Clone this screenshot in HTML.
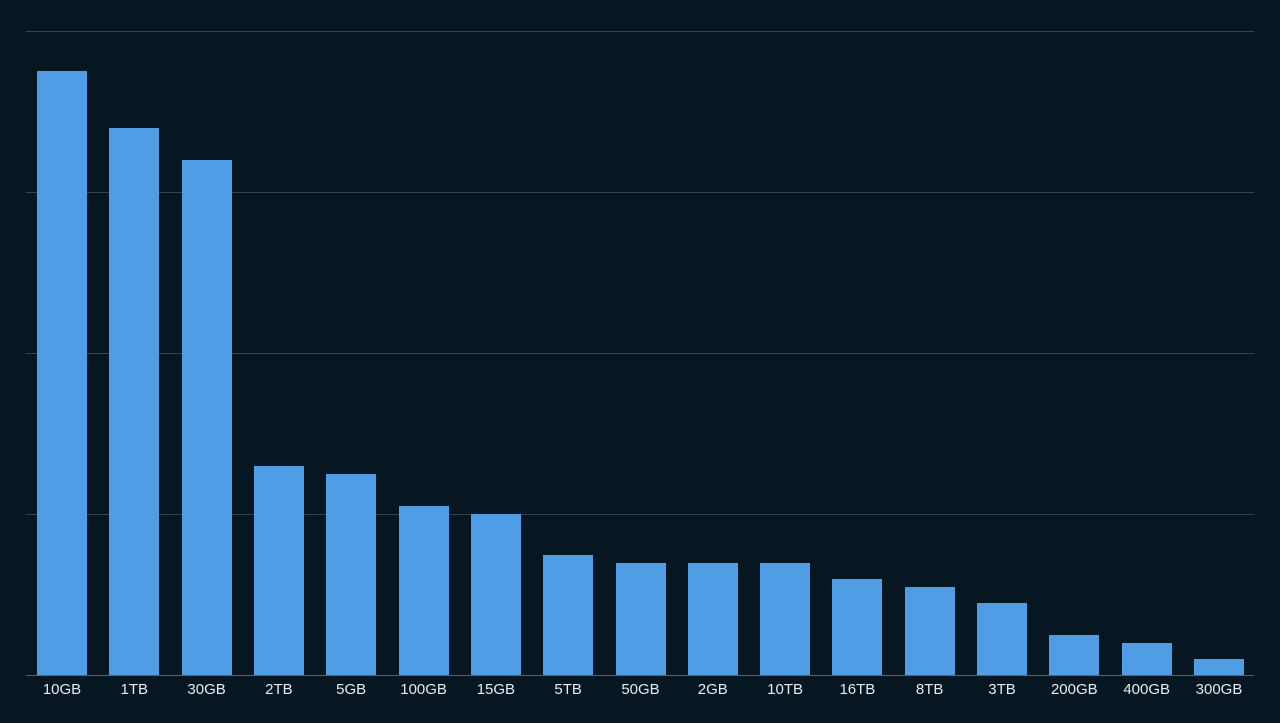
<!DOCTYPE html>
<html><head><style>
body{margin:0;width:1280px;height:723px;background:#061722;position:relative;overflow:hidden;font-family:"Liberation Sans",sans-serif}
.g{position:absolute;left:26px;width:1228px;height:1px;background:#34444e}
.b{position:absolute;width:50px;background:#4f9de4;bottom:48px}
.l{position:absolute;top:681px;width:80px;text-align:center;color:#e6eaee;font-size:15px}
</style></head><body>
<div class="g" style="top:31px"></div>
<div class="g" style="top:192px"></div>
<div class="g" style="top:353px"></div>
<div class="g" style="top:514px"></div>
<div id="c"></div>
<div class="g" style="top:675px;background:#56636b"></div>
<script>
var tops=[71,128,160,466,474,506,514,555,563,563,563,579,587,603,635,643,659];
var labs=["10GB","1TB","30GB","2TB","5GB","100GB","15GB","5TB","50GB","2GB","10TB","16TB","8TB","3TB","200GB","400GB","300GB"];
var h="";
for(var i=0;i<17;i++){var x=37+i*72.31;
h+='<div class="b" style="left:'+x.toFixed(1)+'px;top:'+tops[i]+'px"></div>';
h+='<div class="l" style="left:'+(x-15).toFixed(1)+'px">'+labs[i]+'</div>';}
document.getElementById("c").innerHTML=h;
</script>
</body></html>
